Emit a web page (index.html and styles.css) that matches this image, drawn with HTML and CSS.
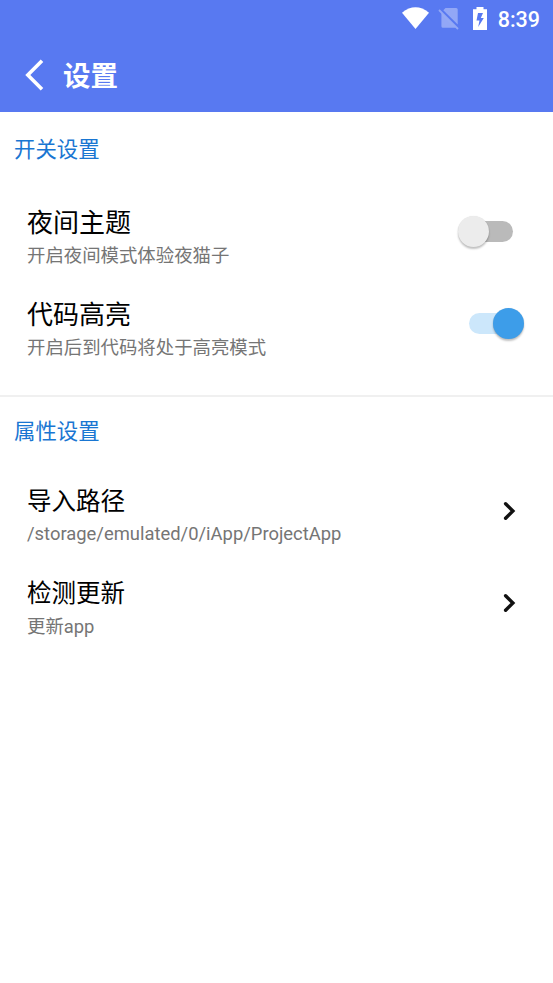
FILE: index.html
```html
<!DOCTYPE html>
<html lang="zh-CN">
<head>
<meta charset="utf-8">
<title>设置</title>
<link rel="stylesheet" href="styles.css">
</head>
<body>
<div class="status">
  <svg class="status-icons" width="92" height="37" viewBox="0 0 92 37" fill="#fff">
    <path d="M1 12.7Q14.5 1.9 28 12.7L14.5 29Z"/>
    <path opacity=".35" d="M44.500 8h10.700q1.500 0 1.500 1.500v15L42.300 10.200ZM40.400 13.400 54.600 27.800H42q-1.600 0-1.600-1.600Z"/>
    <path opacity=".35" d="m38 10 19 19" stroke="#fff" stroke-width="1.800"/>
    <path fill-rule="evenodd" d="M75.500 7h7v2.300h3.500V30H72V9.300h3.500ZM77 13 75.500 20.500h3L77.200 27l5.600-9h-3L82 13Z"/>
  </svg>
  <span class="clock">8:39</span>
</div>
<header class="appbar">
  <svg class="back" width="20" height="32" viewBox="0 0 20 32"><path d="M17 1.700 2.800 16 17 30.300" fill="none" stroke="#fff" stroke-width="3.600"/></svg>
  <h1>设置</h1>
</header>
<main>
  <section class="switches">
    <h2>开关设置</h2>
    <div class="row">
      <div class="copy"><div class="name">夜间主题</div><div class="note">开启夜间模式体验夜猫子</div></div>
      <div class="switch off"><span class="thumb"></span></div>
    </div>
    <div class="row">
      <div class="copy"><div class="name">代码高亮</div><div class="note">开启后到代码将处于高亮模式</div></div>
      <div class="switch on"><span class="thumb"></span></div>
    </div>
  </section>
  <section class="properties">
    <h2>属性设置</h2>
    <div class="row">
      <div class="copy"><div class="name">导入路径</div><div class="note path">/storage/emulated/0/iApp/ProjectApp</div></div>
      <svg class="chevron" width="14" height="20" viewBox="0 0 14 20"><path d="m2.600 2.700 7.300 7.300-7.300 7.300"/></svg>
    </div>
    <div class="row">
      <div class="copy"><div class="name">检测更新</div><div class="note">更新app</div></div>
      <svg class="chevron" width="14" height="20" viewBox="0 0 14 20"><path d="m2.600 2.700 7.300 7.300-7.300 7.300"/></svg>
    </div>
  </section>
</main>
</body>
</html>
```
FILE: styles.css
```css
* { box-sizing: border-box; }
body {
  margin: 0;
  min-height: 983px;
  background: #fff;
  font-family: Roboto, "Noto Sans CJK SC", sans-serif;
}
.status {
  height: 37px;
  padding-right: 13px;
  display: flex;
  justify-content: flex-end;
  align-items: center;
  background: #5879f1;
  color: #fff;
}
.status-icons { margin-right: 5px; }
.clock { font-size: 21.500px; font-weight: 500; line-height: 37px; padding-top: 2px; }
.appbar {
  height: 75px;
  padding-left: 25px;
  display: flex;
  align-items: center;
  gap: 18px;
  background: #5879f1;
  color: #fff;
}
h1 { margin: 0; padding-top: 5px; font-size: 27.500px; font-weight: 700; line-height: 70px; }
h2 {
  margin: 0;
  padding: 1px 0 0 14px;
  font-size: 21.400px;
  font-weight: 400;
  line-height: 73px;
  color: #1976d2;
}
.switches { height: 285px; border-bottom: 2px solid #f0f0f0; }
.properties h2 { padding-top: 2px; line-height: 66px; }
.row {
  height: 92px;
  padding-left: 27px;
  display: flex;
  align-items: center;
  justify-content: space-between;
}
.copy { padding-top: 12px; }
.name { font-size: 26px; line-height: 36px; color: #000; }
.properties .name { font-size: 24.500px; }
.note { height: 30px; font-size: 18.400px; line-height: 30px; color: #757575; }
.path { line-height: 28px; }
.switch { width: 51px; height: 21px; margin-bottom: 1px; border-radius: 11px; position: relative; }
.off { margin-right: 40px; background: #bababa; }
.on { margin-right: 33px; background: #cce7fb; }
.thumb {
  position: absolute;
  top: -5px;
  width: 31px;
  height: 31px;
  border-radius: 50%;
  box-shadow: 0 2px 2px rgba(0, 0, 0, .24), 0 0 1px rgba(0, 0, 0, .12);
}
.off .thumb { left: -4px; background: #ececec; }
.on .thumb { right: -4px; background: #3d9de9; }
.chevron { margin-right: 36px; }
.chevron path { fill: none; stroke: #111; stroke-width: 3.400; stroke-linecap: round; }
```
